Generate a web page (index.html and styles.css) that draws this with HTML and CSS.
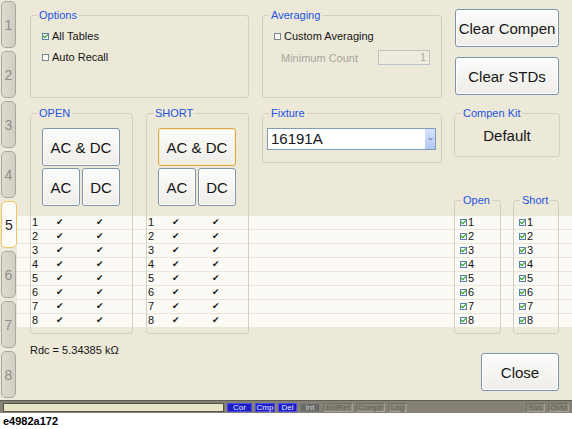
FILE: index.html
```html
<!DOCTYPE html>
<html lang="en">
  <head>
    <meta charset="UTF-8" />
    <meta name="viewport" content="width=device-width, initial-scale=1.0" />
    <title>Compensation</title>

    <link rel="stylesheet" href="styles.css">
  </head>
  <body>
    <div class="screen">
      <div class="tabs">
        <div class="tab">1</div>
        <div class="tab">2</div>
        <div class="tab">3</div>
        <div class="tab">4</div>
        <div class="tab active">5</div>
        <div class="tab">6</div>
        <div class="tab">7</div>
        <div class="tab">8</div>
      </div>

      <div class="main">
        <div class="band">
          <div class="band-row"></div>
          <div class="band-row"></div>
          <div class="band-row"></div>
          <div class="band-row"></div>
          <div class="band-row"></div>
          <div class="band-row"></div>
          <div class="band-row"></div>
          <div class="band-row"></div>
        </div>

        <fieldset class="group options">
          <legend>Options</legend>
          <div class="check-row"><span class="cb on"></span>All Tables</div>
          <div class="check-row"><span class="cb"></span>Auto Recall</div>
        </fieldset>

        <fieldset class="group averaging">
          <legend>Averaging</legend>
          <div class="check-row"><span class="cb"></span>Custom Averaging</div>
          <div class="count-row">
            <span class="count-label">Minimum Count</span>
            <span class="count-box">1</span>
          </div>
        </fieldset>

        <div class="actions">
          <button class="btn big">Clear Compen</button>
          <button class="btn big">Clear STDs</button>
        </div>

        <fieldset class="group std open">
          <legend>OPEN</legend>
          <div class="std-buttons">
            <button class="btn wide">AC &amp; DC</button>
            <button class="btn">AC</button>
            <button class="btn">DC</button>
          </div>
          <div class="std-table">
            <div class="std-row"><span>1</span><span class="tick">✔</span><span class="tick">✔</span></div>
            <div class="std-row"><span>2</span><span class="tick">✔</span><span class="tick">✔</span></div>
            <div class="std-row"><span>3</span><span class="tick">✔</span><span class="tick">✔</span></div>
            <div class="std-row"><span>4</span><span class="tick">✔</span><span class="tick">✔</span></div>
            <div class="std-row"><span>5</span><span class="tick">✔</span><span class="tick">✔</span></div>
            <div class="std-row"><span>6</span><span class="tick">✔</span><span class="tick">✔</span></div>
            <div class="std-row"><span>7</span><span class="tick">✔</span><span class="tick">✔</span></div>
            <div class="std-row"><span>8</span><span class="tick">✔</span><span class="tick">✔</span></div>
          </div>
        </fieldset>

        <fieldset class="group std short">
          <legend>SHORT</legend>
          <div class="std-buttons">
            <button class="btn wide focus">AC &amp; DC</button>
            <button class="btn">AC</button>
            <button class="btn">DC</button>
          </div>
          <div class="std-table">
            <div class="std-row"><span>1</span><span class="tick">✔</span><span class="tick">✔</span></div>
            <div class="std-row"><span>2</span><span class="tick">✔</span><span class="tick">✔</span></div>
            <div class="std-row"><span>3</span><span class="tick">✔</span><span class="tick">✔</span></div>
            <div class="std-row"><span>4</span><span class="tick">✔</span><span class="tick">✔</span></div>
            <div class="std-row"><span>5</span><span class="tick">✔</span><span class="tick">✔</span></div>
            <div class="std-row"><span>6</span><span class="tick">✔</span><span class="tick">✔</span></div>
            <div class="std-row"><span>7</span><span class="tick">✔</span><span class="tick">✔</span></div>
            <div class="std-row"><span>8</span><span class="tick">✔</span><span class="tick">✔</span></div>
          </div>
        </fieldset>

        <fieldset class="group fixture">
          <legend>Fixture</legend>
          <div class="select">
            <span class="select-text">16191A</span>
            <span class="select-arrow">
              <svg width="5" height="4" viewBox="0 0 5 4"><path d="M0.5 0.8 L2.5 2.8 L4.5 0.8" fill="none" stroke="#4d6185" stroke-width="1"/></svg>
            </span>
          </div>
        </fieldset>

        <div class="side">
          <fieldset class="group kit">
            <legend>Compen Kit</legend>
            <div class="kit-value">Default</div>
          </fieldset>

          <div class="picks">
            <fieldset class="group pick pick-open">
              <legend>Open</legend>
              <div class="pick-row"><span class="cb on"></span>1</div>
              <div class="pick-row"><span class="cb on"></span>2</div>
              <div class="pick-row"><span class="cb on"></span>3</div>
              <div class="pick-row"><span class="cb on"></span>4</div>
              <div class="pick-row"><span class="cb on"></span>5</div>
              <div class="pick-row"><span class="cb on"></span>6</div>
              <div class="pick-row"><span class="cb on"></span>7</div>
              <div class="pick-row"><span class="cb on"></span>8</div>
            </fieldset>
            <fieldset class="group pick pick-short">
              <legend>Short</legend>
              <div class="pick-row"><span class="cb on"></span>1</div>
              <div class="pick-row"><span class="cb on"></span>2</div>
              <div class="pick-row"><span class="cb on"></span>3</div>
              <div class="pick-row"><span class="cb on"></span>4</div>
              <div class="pick-row"><span class="cb on"></span>5</div>
              <div class="pick-row"><span class="cb on"></span>6</div>
              <div class="pick-row"><span class="cb on"></span>7</div>
              <div class="pick-row"><span class="cb on"></span>8</div>
            </fieldset>
          </div>
        </div>

        <div class="rdc">Rdc = 5.34385 kΩ</div>

        <button class="btn close">Close</button>
      </div>
    </div>

    <div class="status">
      <div class="status-field"></div>
      <div class="ind on">Cor</div>
      <div class="ind on">Cmp</div>
      <div class="ind on">Del</div>
      <div class="ind int">Int</div>
      <div class="ind off">ExtRef</div>
      <div class="ind off">Comptr</div>
      <div class="ind off">Log</div>
      <div></div>
      <div class="ind off">Svc</div>
      <div class="ind off">Ovld</div>
    </div>

    <div class="caption">e4982a172</div>
  </body>
</html>
```

FILE: styles.css
```css
* {
  box-sizing: border-box;
  margin: 0;
  padding: 0;
}

body {
  width: 572px;
  height: 429px;
  overflow: hidden;
  background: #ffffff;
  font-family: "Liberation Sans", Arial, sans-serif;
  font-size: 11px;
  color: #151515;
}

.screen {
  display: flex;
  height: 400px;
  background-color: #ece9d8;
}

/* side tabs */
.tabs {
  width: 17px;
  display: flex;
  flex-direction: column;
  gap: 3px;
  padding-top: 1px;
}

.tab {
  width: 15px;
  height: 47px;
  margin-left: 1px;
  border: 1px solid #aaa89d;
  border-radius: 5px;
  background: linear-gradient(to right, #dedcd2, #d0cdc1);
  color: #8f8e88;
  font-size: 14px;
  display: flex;
  align-items: center;
  justify-content: center;
}

.tab.active {
  width: 16px;
  background: #fdfcf8;
  border-color: #f0c460;
  color: #222;
}

/* main panel */
.main {
  flex: 1;
  display: grid;
  grid-template-columns: 103px 103px 180px 105px;
  grid-template-rows: 100px 115px 112px 73px;
  column-gap: 13px;
  padding-left: 13px;
}

.band {
  grid-column: 1 / -1;
  grid-row: 3;
  margin-left: -13px;
  margin-right: -12px;
  background: #fbfaf5;
}

.band-row {
  height: 14px;
  border-top: 1px solid #e8e6dc;
}

/* group boxes keep no side padding so the legend stays at the same inset */
.group {
  border: 1px solid #d3d0c1;
  border-radius: 3px;
  min-width: 0;
  align-self: start;
}

.group legend {
  margin-left: 6px;
  padding: 0 2px;
  color: #2453e0;
  font-size: 11px;
  line-height: 13px;
}

.options {
  grid-column: 1 / 3;
  grid-row: 1;
  margin-top: 9px;
  height: 89px;
  padding-top: 8px;
}

.averaging {
  grid-column: 3;
  grid-row: 1;
  margin-top: 9px;
  height: 89px;
  padding-top: 8px;
}

.check-row {
  display: flex;
  align-items: center;
  height: 13px;
  line-height: 13px;
  margin: 0 0 8px 11px;
}

.cb {
  width: 7px;
  height: 7px;
  flex-shrink: 0;
  margin-right: 3px;
  border: 1px solid #7f858e;
  background: #f7f7f2;
  display: flex;
  justify-content: center;
}

.cb.on {
  border-color: #5c81ad;
}

.cb.on::after {
  content: "";
  width: 2px;
  height: 4px;
  margin-top: -1px;
  border: solid #1f9f1f;
  border-width: 0 1px 1px 0;
  transform: rotate(45deg);
}

.count-row {
  display: flex;
  align-items: center;
  height: 15px;
  margin: -1px 0 0 18px;
}

.count-label {
  width: 97px;
  color: #a6a59e;
}

.count-box {
  width: 52px;
  height: 15px;
  line-height: 13px;
  padding-right: 3px;
  text-align: right;
  color: #a8a8a4;
  background: #efecdf;
  border: 1px solid #bcc3c8;
}

/* buttons */
.btn {
  font-family: inherit;
  font-size: 15px;
  color: #151515;
  background: linear-gradient(#fcfcfb, #eeede8);
  border: 1px solid #7e94ab;
  border-radius: 3px;
  box-shadow: inset 0 0 0 1px #ffffff;
  height: 38px;
}

.btn.focus {
  border-color: #dca84a;
  box-shadow: inset 0 0 0 1px #fbecc8;
}

.actions {
  grid-column: 4;
  grid-row: 1;
  margin-top: 9px;
  display: flex;
  flex-direction: column;
  gap: 10px;
}

.big {
  width: 104px;
}

/* OPEN / SHORT standards */
.std {
  grid-row: 2 / 4;
  margin-top: 7px;
  padding: 8px 0 6px;
}

.open {
  grid-column: 1;
}

.short {
  grid-column: 2;
}

.std-buttons {
  display: grid;
  grid-template-columns: 38px 38px;
  gap: 2px;
  margin-left: 11px;
}

.wide {
  grid-column: 1 / -1;
}

.std-table {
  margin-top: 9px;
}

.std-row {
  display: grid;
  grid-template-columns: 24px 40px 10px;
  height: 14px;
  line-height: 15px;
  padding-left: 1px;
}

.tick {
  font-family: "DejaVu Sans", sans-serif;
  font-size: 9px;
}

/* fixture */
.fixture {
  grid-column: 3;
  grid-row: 2;
  margin-top: 7px;
  padding: 8px 0 12px;
}

.select {
  width: 169px;
  height: 22px;
  margin-left: 4px;
  display: flex;
  background: #ffffff;
  border: 1px solid #7f9db9;
}

.select-text {
  padding-left: 3px;
  font-size: 15px;
  line-height: 20px;
}

.select-arrow {
  margin-left: auto;
  width: 10px;
  display: flex;
  align-items: center;
  justify-content: center;
  background: linear-gradient(#d6e2fd, #b3c7f6);
}

/* right column */
.side {
  grid-column: 4;
  grid-row: 2 / 4;
  display: flex;
  flex-direction: column;
  align-self: start;
}

.kit {
  width: 106px;
  margin: 7px 0 0 -1px;
  height: 50px;
}

.kit-value {
  padding-top: 7px;
  font-size: 15px;
  line-height: 18px;
  text-align: center;
}

.picks {
  display: flex;
  gap: 12px;
  margin-top: 37px;
}

.pick {
  padding: 8px 0 6px;
}

.pick-open {
  width: 47px;
  margin-left: -1px;
}

.pick-short {
  width: 46px;
}

.pick-row {
  display: flex;
  align-items: center;
  height: 14px;
  line-height: 14px;
  padding-left: 5px;
}

.pick-row .cb {
  margin-right: 1px;
}

.rdc {
  grid-column: 1 / 4;
  grid-row: 4;
  align-self: start;
  margin-top: 17px;
  line-height: 13px;
}

.close {
  grid-column: 4;
  grid-row: 4;
  align-self: start;
  justify-self: end;
  width: 78px;
  margin-top: 26px;
  margin-right: 1px;
}

/* status bar */
.status {
  height: 13px;
  display: grid;
  grid-template-columns: 221px 25px 20px 19px 20px 30px 29px 19px 1fr 19px 21px;
  gap: 3px;
  align-items: center;
  padding: 0 3px;
  background: #858275;
  border-top: 1px solid #5e5c53;
}

.status-field {
  height: 9px;
  background: #e8e5c6;
  border: 1px solid #55544c;
}

.ind {
  height: 9px;
  font-size: 8px;
  line-height: 7px;
  text-align: center;
  border: 1px solid;
}

.ind.on {
  background: #1e1ec8;
  color: #e6e6ff;
  border-color: #4a4ae6;
}

.ind.int {
  background: #686866;
  color: #d0d0d0;
  border-color: #7b7b78;
}

.ind.off {
  background: #8a877b;
  color: #5f5d55;
  border-color: #6f6c61 #a3a093 #a3a093 #6f6c61;
}

.caption {
  height: 16px;
  padding: 2px 0 0 3px;
  font-weight: bold;
  font-size: 11px;
  line-height: 13px;
  color: #000;
}
```
